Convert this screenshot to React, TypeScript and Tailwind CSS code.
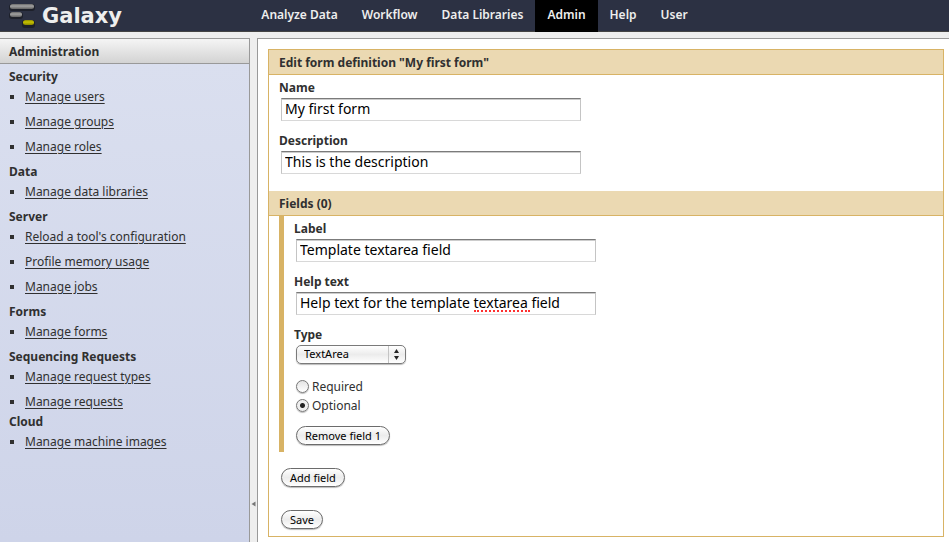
import { useState } from "react";
import type { InputHTMLAttributes, ReactNode } from "react";

const navItems = ["Analyze Data", "Workflow", "Data Libraries", "Admin", "Help", "User"];

const sections = [
  { title: "Security", items: ["Manage users", "Manage groups", "Manage roles"] },
  { title: "Data", items: ["Manage data libraries"] },
  { title: "Server", items: ["Reload a tool's configuration", "Profile memory usage", "Manage jobs"] },
  { title: "Forms", items: ["Manage forms"] },
  { title: "Sequencing Requests", items: ["Manage request types", "Manage requests"], tight: true },
  { title: "Cloud", items: ["Manage machine images"] },
];

function Logo() {
  return (
    <svg width="26" height="26" viewBox="0 0 26 26" aria-hidden="true">
      <defs>
        <linearGradient id="grey" x1="0" y1="0" x2="0" y2="1">
          <stop offset="0" stopColor="#6a6a6a" />
          <stop offset="0.4" stopColor="#a2a2a2" />
          <stop offset="1" stopColor="#626262" />
        </linearGradient>
        <linearGradient id="gold" x1="0" y1="0" x2="0" y2="1">
          <stop offset="0" stopColor="#8d8a00" />
          <stop offset="0.4" stopColor="#c9c400" />
          <stop offset="1" stopColor="#8a8600" />
        </linearGradient>
      </defs>
      <g fill="#191b22" opacity="0.75">
        <rect x="0" y="1" width="26" height="7" rx="3" />
        <rect x="0" y="9" width="14" height="7" rx="3" />
        <rect x="13" y="17" width="13" height="8" rx="3" />
      </g>
      <rect x="1" y="1" width="24" height="5" rx="2.5" fill="url(#grey)" />
      <rect x="1" y="9" width="12" height="5" rx="2.5" fill="url(#grey)" />
      <rect x="14" y="17" width="11" height="5" rx="2.5" fill="url(#gold)" />
    </svg>
  );
}

function TextField({
  id,
  label,
  children,
  ...rest
}: { id: string; label: string; children?: ReactNode } & InputHTMLAttributes<HTMLInputElement>) {
  return (
    <div className="mb-3">
      <label htmlFor={id} className="block h-[18px] text-xs leading-4 font-bold">
        {label}
      </label>
      <div className="relative ml-0.5 max-w-[300px]">
        <input
          id={id}
          type="text"
          spellCheck={false}
          className="block h-[23px] w-full border border-[#c4c4c4] border-t-[#7b7b7b] border-b-[#d8d8d8] bg-white px-[3px] pb-0.5 text-sm leading-5 text-black shadow-[inset_0_1px_0_#cccccc] outline-none"
          {...rest}
        />
        {children}
      </div>
    </div>
  );
}

function PillButton({ children }: { children: ReactNode }) {
  return (
    <button
      type="button"
      className="ml-0.5 block h-[19px] rounded-full border border-[#6b6b6b] bg-linear-to-b from-white via-[#ececec] to-white px-2 text-[11px] leading-4 text-black shadow-[0_1px_1px_#bbbbbb]"
    >
      {children}
    </button>
  );
}

export default function App() {
  const [required, setRequired] = useState("Optional");
  return (
    <div className="flex min-h-screen flex-col bg-[#eeeeee] font-['Noto_Sans','Open_Sans',sans-serif] text-xs text-[#303030]">
      <header className="grid h-8 grid-cols-[1fr_auto_1fr] border-b border-[#444444] bg-[#2c3143]">
        <a href="#" className="flex items-center gap-[7px] pl-[9px] font-['DejaVu_Sans',sans-serif] text-[21px] leading-8 font-bold text-[#eeeeee]">
          <Logo />
          Galaxy
        </a>
        <nav className="flex text-[#eeeeee]">
          {navItems.map((item) => (
            <a
              key={item}
              href="#"
              className={item === "Admin" ? "bg-black px-3 leading-[30px] font-semibold" : "px-3 leading-[30px] font-semibold"}
            >
              {item}
            </a>
          ))}
        </nav>
      </header>

      <div className="mt-1.5 flex grow">
        <aside className="flex w-[250px] shrink-0 flex-col border-t border-r border-[#999999]">
          <h2 className="h-[25px] border-b border-[#999999] bg-linear-to-b from-[#f5f5f5] to-[#d3d3d3] pl-[9px] leading-[25px] font-bold">
            Administration
          </h2>
          <div className="grow bg-linear-to-b from-[#dadfef] to-[#ced4e9] pt-[3px] pl-[9px]">
            {sections.map((section) => (
              <section key={section.title}>
                <h3 className="leading-5 font-bold">{section.title}</h3>
                <ul className={section.tight ? "flex flex-col gap-[5px]" : "mb-[5px] flex flex-col gap-[5px]"}>
                  {section.items.map((item) => (
                    <li key={item} className="flex items-center leading-5">
                      <span className="mr-[11px] ml-px size-1 bg-[#303030]" />
                      <a href="#" className="underline underline-offset-2">
                        {item}
                      </a>
                    </li>
                  ))}
                </ul>
              </section>
            ))}
          </div>
        </aside>

        <button type="button" aria-label="Collapse panel" className="flex w-[7px] shrink-0 items-end justify-center pb-[35px]">
          <svg width="5" height="6" viewBox="0 0 5 6" aria-hidden="true">
            <path d="M4.5 0.5v5L0.5 3z" fill="#777777" />
          </svg>
        </button>

        <main className="grow border-t border-l border-[#999999] bg-white pt-2.5 pr-[5px] pb-[5px] pl-2.5">
          <form className="border border-[#d8b365]">
            <h1 className="h-[25px] border-b border-[#d8b365] bg-[#ebd9b2] pl-2.5 leading-[25px] font-bold">
              Edit form definition "My first form"
            </h1>
            <div className="pt-[5px] pb-[5px] pl-2.5">
              <TextField id="name" label="Name" defaultValue="My first form" />
              <TextField id="description" label="Description" defaultValue="This is the description" />
            </div>
            <h2 className="h-[25px] border-b border-[#d8b365] bg-[#ebd9b2] pl-2.5 leading-[25px] font-bold">Fields (0)</h2>
            <div className="ml-2.5">
              <div className="border-l-[5px] border-[#d8b365] pt-[5px] pb-[7px] pl-2.5">
                <TextField id="label" label="Label" defaultValue="Template textarea field" />
                <TextField id="help" label="Help text" defaultValue="Help text for the template textarea field">
                  <span className="pointer-events-none absolute bottom-[3px] left-[178px] w-14 border-b-2 border-dotted border-[#ff3030]" />
                </TextField>
                <label htmlFor="type" className="block h-[18px] leading-4 font-bold">
                  Type
                </label>
                <div className="relative ml-0.5 w-[110px]">
                  <select
                    id="type"
                    className="block h-[19px] w-full appearance-none rounded-[5px] border border-[#7a7a7a] bg-linear-to-b from-white via-[#ececec] to-white pb-0.5 pl-[7px] text-[11px] leading-4 text-black shadow-[0_1px_1px_#bbbbbb]"
                  >
                    <option>TextArea</option>
                  </select>
                  <svg className="pointer-events-none absolute top-px right-px" width="17" height="17" viewBox="0 0 17 17" aria-hidden="true">
                    <path d="M0.5 0v17" stroke="#c4c4c4" />
                    <path d="M6 7L8.5 3L11 7zM6 10L8.5 14L11 10z" fill="#222222" />
                  </svg>
                </div>
                <div className="mt-[13px] mb-[11px] ml-0.5">
                  {["Required", "Optional"].map((option) => (
                    <label key={option} className="flex h-[19px] items-center gap-[3px]">
                      <input
                        type="radio"
                        name="required"
                        checked={required === option}
                        onChange={() => setRequired(option)}
                        className="size-[13px] appearance-none rounded-full border border-[#777777] bg-linear-to-b from-[#e4e4e4] to-white shadow-[0_1px_1px_#bbbbbb] checked:bg-[radial-gradient(circle,#222222_2px,#eeeeee_3px)]"
                      />
                      {option}
                    </label>
                  ))}
                </div>
                <PillButton>Remove field 1</PillButton>
              </div>
              <div className="flex flex-col items-start gap-[23px] pt-4 pb-[7px]">
                <PillButton>Add field</PillButton>
                <PillButton>Save</PillButton>
              </div>
            </div>
          </form>
        </main>
      </div>
    </div>
  );
}
